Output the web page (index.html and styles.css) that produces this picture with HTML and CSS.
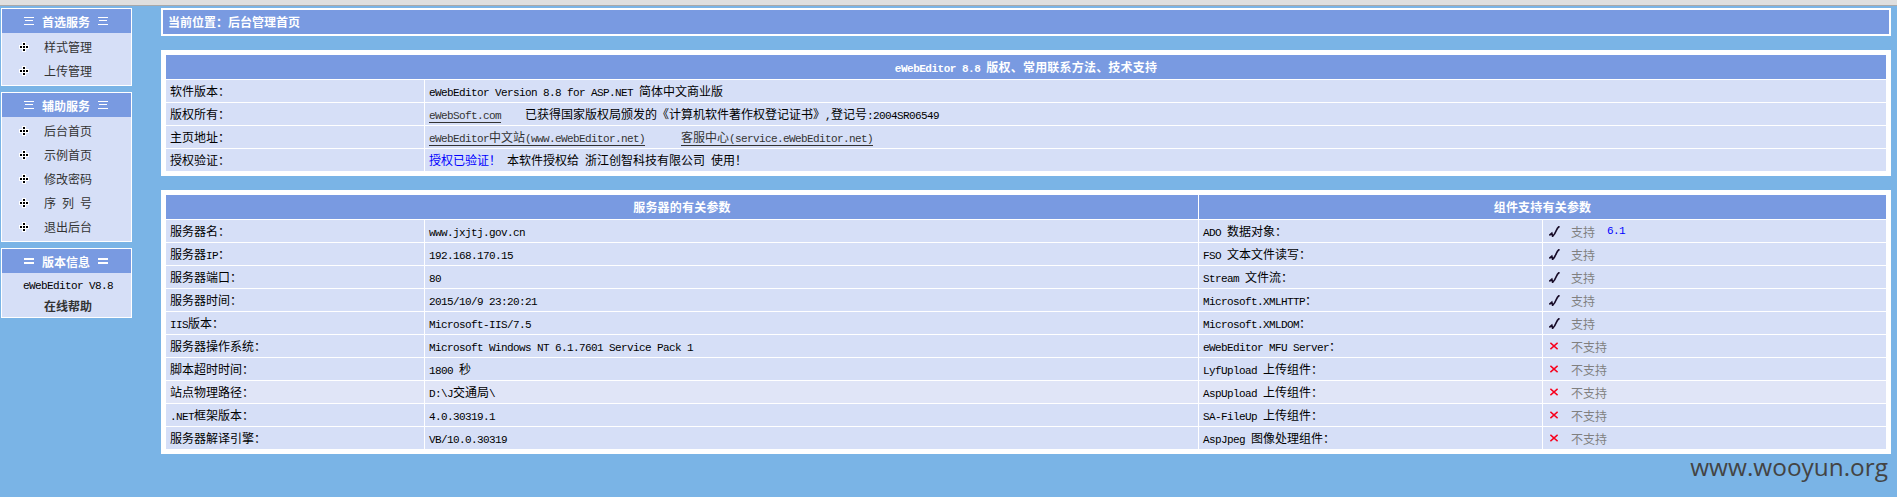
FILE: index.html
```
<!DOCTYPE html>
<html lang="zh-CN"><head><meta charset="utf-8"><title>eWebEditor</title><link rel="stylesheet" href="styles.css"></head>
<body>
<svg class="defs" width="0" height="0"><defs>
<symbol id="dot" viewBox="0 0 10 10"><path fill="#fff" d="M3 0h4v3h3v4H7v3H3V7H0V3h3z"/><path d="M4 1h2v2H4zM4 7h2v2H4zM1 4h2v2H1zM7 4h2v2H7zM4 4h2v2H4z"/></symbol>
<symbol id="yes" viewBox="0 0 11 11"><path fill="none" stroke="#180c28" stroke-width="1.7" d="M.3 9.300 2.800 7.300 3.600 10.200C5.200 9 6.500 6.500 7.300 4.500S8.500 1.500 10.500.3"/></symbol>
<symbol id="no" viewBox="0 0 8 8"><path fill="none" stroke="#f8001c" stroke-width="1.5" d="M.4.8 7.600 7.200M7.600.8.4 7.200"/></symbol>
</defs></svg>
<div class="topbar"></div>
<div class="page">
<div class="side">
<div class="box"><div class="head"><svg class="bars" viewBox="0 0 10 8"><path d="M0 0h10v1H0zM1 3h8v1H1zM0 7h10v1H0z"/></svg><b>首选服务</b><svg class="bars" viewBox="0 0 10 8"><path d="M0 0h10v1H0zM1 3h8v1H1zM0 7h10v1H0z"/></svg></div>
<div class="list"><div class="item"><svg><use href="#dot"/></svg>样式管理</div><div class="item"><svg><use href="#dot"/></svg>上传管理</div></div></div>
<div class="box"><div class="head"><svg class="bars" viewBox="0 0 10 8"><path d="M0 0h10v1H0zM1 3h8v1H1zM0 7h10v1H0z"/></svg><b>辅助服务</b><svg class="bars" viewBox="0 0 10 8"><path d="M0 0h10v1H0zM1 3h8v1H1zM0 7h10v1H0z"/></svg></div>
<div class="list"><div class="item"><svg><use href="#dot"/></svg>后台首页</div><div class="item"><svg><use href="#dot"/></svg>示例首页</div><div class="item"><svg><use href="#dot"/></svg>修改密码</div><div class="item"><svg><use href="#dot"/></svg>序<i> </i>列<i> </i>号</div><div class="item"><svg><use href="#dot"/></svg>退出后台</div></div></div>
<div class="box"><div class="head"><svg class="bars" viewBox="0 0 10 8"><path d="M0 1h10v2H0zM0 5h10v2H0z"/></svg><b>版本信息</b><svg class="bars" viewBox="0 0 10 8"><path d="M0 1h10v2H0zM0 5h10v2H0z"/></svg></div>
<div class="info"><div class="ver"><i>eWebEditor V8.8</i></div><div class="help">在线帮助</div></div></div>
</div>
<div class="main">
<div class="crumb">当前位置：后台管理首页</div>
<div class="panel about">
<div class="th wide"><span><i>eWebEditor 8.8 </i>版权、常用联系方法、技术支持</span></div>
<div>软件版本：</div><div><i>eWebEditor Version 8.8 for ASP.NET </i>简体中文商业版</div>
<div>版权所有：</div><div><a><i>eWebSoft.com</i></a><i>    </i>已获得国家版权局颁发的《计算机软件著作权登记证书》<i>,</i>登记号<i>:2004SR06549</i></div>
<div>主页地址：</div><div><a><i>eWebEditor</i>中文站<i>(www.eWebEditor.net)</i></a><i>      </i><a>客服中心<i>(service.eWebEditor.net)</i></a></div>
<div>授权验证：</div><div><span class="blue">授权已验证！</span><i> </i>本软件授权给<i> </i>浙江创智科技有限公司<i> </i>使用！</div>
</div>
<div class="panel params">
<div class="th half">服务器的有关参数</div><div class="th half">组件支持有关参数</div>
<div>服务器名：</div><div><i>www.jxjtj.gov.cn</i></div><div><i>ADO </i>数据对象：</div><div class="st"><svg class="y"><use href="#yes"/></svg>支持<i class="blue">  6.1</i></div>
<div>服务器<i>IP</i>：</div><div><i>192.168.170.15</i></div><div><i>FSO </i>文本文件读写：</div><div class="st"><svg class="y"><use href="#yes"/></svg>支持</div>
<div>服务器端口：</div><div><i>80</i></div><div><i>Stream </i>文件流：</div><div class="st"><svg class="y"><use href="#yes"/></svg>支持</div>
<div>服务器时间：</div><div><i>2015/10/9 23:20:21</i></div><div><i>Microsoft.XMLHTTP</i>：</div><div class="st"><svg class="y"><use href="#yes"/></svg>支持</div>
<div><i>IIS</i>版本：</div><div><i>Microsoft-IIS/7.5</i></div><div><i>Microsoft.XMLDOM</i>：</div><div class="st"><svg class="y"><use href="#yes"/></svg>支持</div>
<div>服务器操作系统：</div><div><i>Microsoft Windows NT 6.1.7601 Service Pack 1</i></div><div><i>eWebEditor MFU Server</i>：</div><div class="st"><svg class="n"><use href="#no"/></svg>不支持</div>
<div>脚本超时时间：</div><div><i>1800 </i>秒</div><div><i>LyfUpload </i>上传组件：</div><div class="st"><svg class="n"><use href="#no"/></svg>不支持</div>
<div class="hl">站点物理路径：</div><div class="hl"><i>D:\J</i>交通局<i>\</i></div><div class="hl"><i>AspUpload </i>上传组件：</div><div class="st hl"><svg class="n"><use href="#no"/></svg>不支持</div>
<div><i>.NET</i>框架版本：</div><div><i>4.0.30319.1</i></div><div><i>SA-FileUp </i>上传组件：</div><div class="st"><svg class="n"><use href="#no"/></svg>不支持</div>
<div>服务器解译引擎：</div><div><i>VB/10.0.30319</i></div><div><i>AspJpeg </i>图像处理组件：</div><div class="st"><svg class="n"><use href="#no"/></svg>不支持</div>
</div>
<div class="mark">www.wooyun.org</div>
</div>
</div>
</body></html>
```
FILE: styles.css
```
* { box-sizing: border-box; }
body { margin: 0; height: 497px; overflow: hidden; background: #7ab4e6; color: #000; font: 12px/21px "Noto Sans CJK SC", sans-serif; }
.defs { display: block; height: 0; }
/* half-width latin cells, 6px each */
i { font: normal 11px/1 "Liberation Mono", monospace; letter-spacing: -0.6px; white-space: pre; }
b i, .th i { font-weight: bold; }
.topbar { height: 6px; background: #dfdfdf; border-bottom: 1px solid #a9a9a9; }
.page { display: flex; padding: 2px 6px 0 1px; }
.side { width: 131px; margin-right: 29px; display: flex; flex-direction: column; gap: 6px; }
.box { border: 1px solid #fff; background: #d6dff7; }
.head { height: 24px; padding-left: 22px; display: flex; align-items: center; gap: 8px; background: #799ae1; color: #fff; }
.head b { width: 48px; white-space: nowrap; }
.bars { width: 10px; height: 8px; fill: #fff; }
.list { padding: 2px 0; color: #333; }
.item { height: 24px; line-height: 24px; display: flex; align-items: center; white-space: pre; padding-left: 17px; }
.item svg { width: 10px; height: 10px; margin-right: 15px; }
.info { height: 44px; }
.ver { padding-left: 21px; }
.help { padding-left: 42px; line-height: 23px; font-weight: bold; color: #333; }
.main { flex: 1; }
.crumb { height: 28px; border: 2px solid #fff; background: #799ae1; color: #fff; font-weight: bold; line-height: 23px; padding-left: 5px; }
.panel { display: grid; gap: 1px; background: #fff; padding: 5px; margin-top: 14px; grid-auto-rows: 22px; }
.about { grid-template: 24px / 258px 1fr; }
.params { grid-template: 24px / 258px 773px 343px 343px; }
.panel > div { background: #d6dff7; padding-left: 4px; white-space: nowrap; }
.panel > .hl { background: #e0e5f7; }
.panel > .th { background: #799ae1; color: #fff; font-weight: bold; text-align: center; line-height: 23px; padding: 0; grid-column: span 2; letter-spacing: 0.2px; }
.th i { letter-spacing: -0.5px; }
a { color: #333; border-bottom: 1px solid #333; display: inline-block; line-height: 15px; }
.blue, .st .blue { color: #00f; }
.panel > .st { display: flex; align-items: center; color: #808080; padding-left: 6px; }
.y { width: 11px; height: 11px; margin-right: 11px; }
.n { width: 8px; height: 8px; margin: 0 13px 0 1px; }
.mark { text-align: right; font: 24.4px/30px "Open Sans", sans-serif; color: #444; padding-right: 3px; margin-top: -2px; }
```
